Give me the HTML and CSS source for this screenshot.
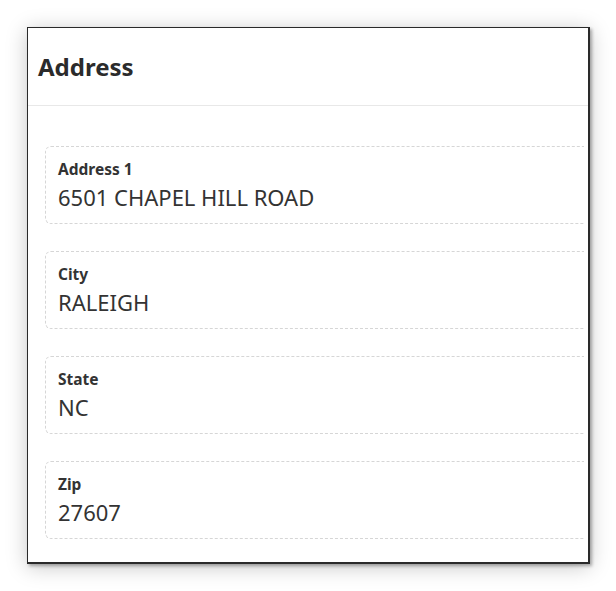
FILE: index.html
```html
<!DOCTYPE html>
<html>
<head>
<meta charset="utf-8">
<link rel="stylesheet" href="styles.css">
</head>
<body>
<div class="card">
  <div class="card-header"><h2 class="title">Address</h2></div>
  <div class="card-body">
    <div class="field"><div class="label">Address 1</div><div class="value">6501 CHAPEL HILL ROAD</div></div>
    <div class="field"><div class="label">City</div><div class="value">RALEIGH</div></div>
    <div class="field"><div class="label">State</div><div class="value">NC</div></div>
    <div class="field"><div class="label">Zip</div><div class="value">27607</div></div>
  </div>
</div>
</body>
</html>
```
FILE: styles.css
```css
html, body { margin: 0; padding: 0; background: #fff; }
body {
  padding: 27px 0 0 27px;
  min-height: 591px;
  box-sizing: border-box;
  font-family: "Noto Sans", "Open Sans", sans-serif;
  color: #222;
}
.card {
  width: 560px;
  height: 534px;
  border: 1px solid #2a2a2a;
  border-right-width: 2px;
  border-bottom-width: 2px;
  background: #fff;
  box-shadow: 2px 2px 3px rgba(0,0,0,0.3), 0 3px 20px rgba(0,0,0,0.22);
  display: flex;
  flex-direction: column;
}
.card-header {
  height: 78px;
  box-sizing: border-box;
  border-bottom: 1px solid #e8e8e8;
  padding: 23px 0 0 10px;
}
.title { margin: 0; font-size: 24px; line-height: 32px; font-weight: 700; color: #2b2b2b; }
.card-body {
  padding: 40px 0 0 17px;
  margin-right: 4px;
  overflow: hidden;
  display: flex;
  flex-direction: column;
  gap: 27px;
}
.field {
  width: calc(100% + 20px);
  height: 78px;
  box-sizing: border-box;
  border: 1px dashed #d6d6d6;
  border-radius: 6px;
  padding: 12px 0 0 12px;
  flex: none;
}
.label { font-size: 15.5px; font-weight: 700; color: #333; line-height: 20px; }
.value { font-size: 22px; font-weight: 400; color: #333; line-height: 30px; margin-top: 3px; }
```
